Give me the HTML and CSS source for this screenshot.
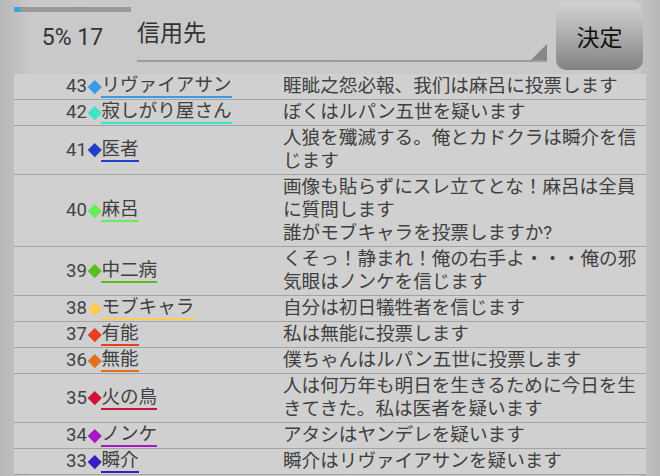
FILE: index.html
```html
<!DOCTYPE html>
<html lang="ja">
<head>
<meta charset="utf-8">
<link rel="stylesheet" href="styles.css">
</head>
<body>
<div class="header">
  <div class="status">
    <div class="progress"><div class="progress-fill" style="width:5%"></div></div>
    <div class="count">5% 17</div>
  </div>
  <div class="spinner">信用先</div>
  <div class="button">決定</div>
</div>
<div class="list">
  <div class="row"><div class="who"><span class="num">43</span><span class="dia c43"></span><span class="name c43">リヴァイアサン</span></div><div class="msg">睚眦之怨必報、我们は麻呂に投票します</div></div>
  <div class="row"><div class="who"><span class="num">42</span><span class="dia c42"></span><span class="name c42">寂しがり屋さん</span></div><div class="msg">ぼくはルパン五世を疑います</div></div>
  <div class="row"><div class="who"><span class="num">41</span><span class="dia c41"></span><span class="name c41">医者</span></div><div class="msg">人狼を殲滅する。俺とカドクラは瞬介を信じます</div></div>
  <div class="row"><div class="who"><span class="num">40</span><span class="dia c40"></span><span class="name c40">麻呂</span></div><div class="msg">画像も貼らずにスレ立てとな！麻呂は全員に質問します<br>誰がモブキャラを投票しますか?</div></div>
  <div class="row"><div class="who"><span class="num">39</span><span class="dia c39"></span><span class="name c39">中二病</span></div><div class="msg">くそっ！静まれ！俺の右手よ・・・俺の邪気眼はノンケを信じます</div></div>
  <div class="row"><div class="who"><span class="num">38</span><span class="dia c38"></span><span class="name c38">モブキャラ</span></div><div class="msg">自分は初日犠牲者を信じます</div></div>
  <div class="row"><div class="who"><span class="num">37</span><span class="dia c37"></span><span class="name c37">有能</span></div><div class="msg">私は無能に投票します</div></div>
  <div class="row"><div class="who"><span class="num">36</span><span class="dia c36"></span><span class="name c36">無能</span></div><div class="msg">僕ちゃんはルパン五世に投票します</div></div>
  <div class="row"><div class="who"><span class="num">35</span><span class="dia c35"></span><span class="name c35">火の鳥</span></div><div class="msg">人は何万年も明日を生きるために今日を生きてきた。私は医者を疑います</div></div>
  <div class="row"><div class="who"><span class="num">34</span><span class="dia c34"></span><span class="name c34">ノンケ</span></div><div class="msg">アタシはヤンデレを疑います</div></div>
  <div class="row"><div class="who"><span class="num">33</span><span class="dia c33"></span><span class="name c33">瞬介</span></div><div class="msg">瞬介はリヴァイアサンを疑います</div></div>
</div>
</body>
</html>
```

FILE: styles.css
```css
html, body {
  margin: 0;
  padding: 0;
}
body {
  width: 660px;
  height: 476px;
  overflow: hidden;
  font-family: Roboto, "Noto Sans CJK JP", sans-serif;
  color: #404040;
  background: linear-gradient(to right, #b6b6b6 0px, #c9c9c9 30px, #cacaca 630px, #b6b6b6 660px);
}
.header {
  display: flex;
  align-items: flex-start;
  height: 74px;
  padding-left: 14px;
  box-sizing: border-box;
}
.status {
  width: 117px;
  padding-top: 7px;
}
.progress {
  height: 5px;
  background: #999999;
}
.progress-fill {
  height: 100%;
  background: #33a8e0;
}
.count {
  text-align: center;
  font-size: 23px;
  color: #333333;
  margin-top: 13px;
  line-height: 26px;
}
.spinner {
  position: relative;
  margin-left: 6px;
  width: 410px;
  height: 62px;
  box-sizing: border-box;
  border-bottom: 2px solid #9c9c9c;
  font-size: 23px;
  line-height: 28px;
  padding-top: 20px;
  color: #333333;
}
.spinner::after {
  content: "";
  position: absolute;
  right: 0;
  bottom: 0;
  width: 0;
  height: 0;
  border-left: 16px solid transparent;
  border-bottom: 16px solid #878787;
}
.button {
  margin-left: 9px;
  margin-top: 2px;
  width: 87px;
  height: 68px;
  border-radius: 10px;
  background: linear-gradient(to bottom, #d2d2d2 0%, #b4b4b4 40%, #828282 100%);
  color: #111111;
  font-size: 23px;
  display: flex;
  align-items: center;
  justify-content: center;
}
.list {
  margin: 0 14px;
  width: 632px;
}
.row {
  display: grid;
  grid-template-columns: 269px 363px;
  background: #d0d0d0;
  border-bottom: 1px solid #a3a3a3;
  font-size: 18.6px;
  line-height: 23px;
  padding: 1px 0;
}
.who {
  display: flex;
  align-items: center;
  padding-left: 52px;
}
.num {
  color: #444444;
}
.dia {
  width: 9.5px;
  height: 9.5px;
  transform: rotate(45deg);
  margin: 0 2px 0 3px;
  flex: none;
}
.name {
  line-height: 21px;
  border-bottom: 2.5px solid;
  color: #404040;
}
.msg {
  color: #404040;
}
.dia.c43 { background: #3a9ae4; }
.name.c43 { border-color: #3a9ae4; }
.dia.c42 { background: #3ce4c8; }
.name.c42 { border-color: #3ce4c8; }
.dia.c41 { background: #1f3fc9; }
.name.c41 { border-color: #1f3fc9; }
.dia.c40 { background: #66ee55; }
.name.c40 { border-color: #66ee55; }
.dia.c39 { background: #5cbe1e; }
.name.c39 { border-color: #5cbe1e; }
.dia.c38 { background: #ffcc55; }
.name.c38 { border-color: #ffcc55; }
.dia.c37 { background: #e8401e; }
.name.c37 { border-color: #e8401e; }
.dia.c36 { background: #e0701e; }
.name.c36 { border-color: #e0701e; }
.dia.c35 { background: #d0103a; }
.name.c35 { border-color: #d0103a; }
.dia.c34 { background: #a818c0; }
.name.c34 { border-color: #a818c0; }
.dia.c33 { background: #3420c0; }
.name.c33 { border-color: #3420c0; }
```
